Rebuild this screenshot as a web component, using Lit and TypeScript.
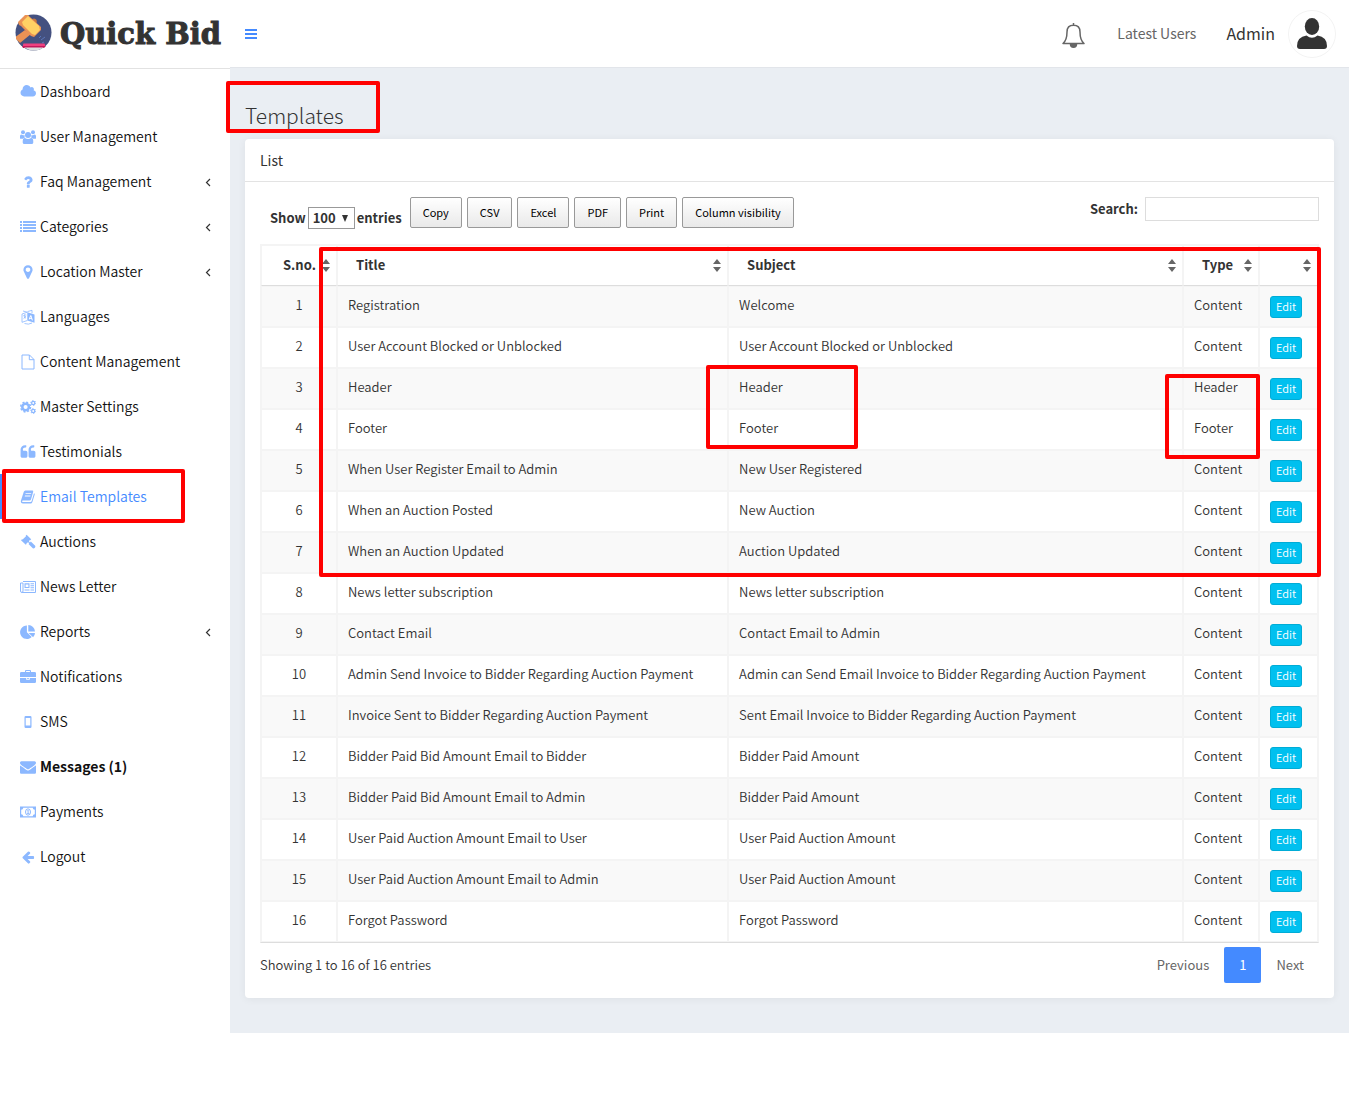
import { LitElement, html, css, svg } from "lit";
import { customElement, property } from "lit/decorators.js";
import { classMap } from "lit/directives/class-map.js";

const wide = (d: string) => svg`<g transform="scale(0.008929)"><path d=${d}></path></g>`;

const ICONS: Record<string, unknown> = {
  cloud: svg`<g transform="scale(0.00806)"><path d="M1984 1152q0 159-112.500 271.500t-271.500 112.500h-1088q-185 0-316.500-131.500t-131.500-316.500q0-132 71-241.500t187-163.500q-2-28-2-43 0-212 150-362t362-150q158 0 286.500 88t187.500 230q70-62 166-62 106 0 181 75t75 181q0 75-41 138 129 30 213 134.500t84 239.500z"></path></g>`,
  users: svg`<circle cx="3" cy="3.300" r="2"></circle><circle cx="13" cy="3.300" r="2"></circle><path d="M0 9.300V7.200Q0 5.600 1.300 5.600Q3 6.700 4.600 6Q4.300 7.800 5 8.600Q3.600 8.800 3 9.800H.8Q0 9.800 0 9.300zM16 9.300V7.200Q16 5.600 14.700 5.600Q13 6.700 11.400 6Q11.700 7.800 11 8.600Q12.400 8.800 13 9.800H15.200Q16 9.800 16 9.300z"></path><circle cx="8" cy="6" r="3"></circle><path d="M2.700 13.500Q2.500 9 5 9.100Q8 11 11 9.100Q13.500 9 13.300 13.500Q13.200 15 11.600 15H4.400Q2.800 15 2.700 13.500z"></path>`,
  question: wide("M1088 1256v240q0 16-12 28t-28 12h-240q-16 0-28-12t-12-28v-240q0-16 12-28t28-12h240q16 0 28 12t12 28zm316-600q0 54-15.500 101t-35 76.500-55 59.500-57.500 43.500-61 35.500q-41 23-68.500 65t-27.500 67q0 17-12 32.500t-28 15.500h-240q-15 0-25.500-18.500t-10.500-37.500v-45q0-83 65-156.500t143-108.500q59-27 84-56t25-76q0-42-46.500-74t-107.500-32q-65 0-108 29-35 25-107 115-13 16-31 16-12 0-25-8l-164-125q-13-10-15.500-25t5.500-28q160-266 464-266 80 0 161 31t146 83 106 127.500 41 158.500z"),
  list: svg`<path d="M0 2h2v2H0zM0 5h2v2H0zM0 8h2v2H0zM0 11h2v2H0zM3 2h13v2H3zM3 5h13v2H3zM3 8h13v2H3zM3 11h13v2H3z"></path>`,
  marker: wide("M1152 640q0-106-75-181t-181-75-181 75-75 181 75 181 181 75 181-75 75-181zm256 0q0 109-33 179l-364 774q-16 33-47.500 52t-67.500 19-67.500-19-46.500-52l-365-774q-33-70-33-179 0-212 150-362t362-150 362 150 150 362z"),
  language: svg`<path d="M7.300 3.200L14.500 5.400V13.800L7.300 11.500zM10.300 6.200L8.700 10.300L9.700 10.600L10 9.700L11.600 10.200L11.900 11.300L12.900 11.600L11.400 6.600zM10.800 7.500L11.300 9.200L10.300 8.900z" fill-rule="evenodd"></path><path d="M7.300 3.200L2 5V13.300L7.300 11.500M3 2L7.300 3.200M7.500 2.600L12 1.300V4.200M4.500 14.500Q8.500 16 12 14" fill="none" stroke="currentColor" stroke-width="0.800"></path><path d="M3.300 6.600L6.200 5.700M4.500 5.400L4.800 9M3.500 9.600Q5.600 8.500 5.900 6.700M3.800 7.600L6 9.300" fill="none" stroke="currentColor" stroke-width="0.700"></path>`,
  file: svg`<path d="M2 1H9.500L14 5.500V15H2zM9.300 1V5.700H14" fill="none" stroke="currentColor"></path>`,
  cogs: svg`<circle cx="5.600" cy="8" r="3.300" fill="none" stroke="currentColor" stroke-width="2.500"></circle><circle cx="5.600" cy="8" r="4.900" fill="none" stroke="currentColor" stroke-width="1.500" stroke-dasharray="2 1.850"></circle><circle cx="13.200" cy="4" r="1.600" fill="none" stroke="currentColor" stroke-width="1.300"></circle><circle cx="13.200" cy="4" r="2.500" fill="none" stroke="currentColor" stroke-dasharray="1.200 1.420"></circle><circle cx="13.200" cy="12" r="1.600" fill="none" stroke="currentColor" stroke-width="1.300"></circle><circle cx="13.200" cy="12" r="2.500" fill="none" stroke="currentColor" stroke-dasharray="1.200 1.420"></circle>`,
  quote: wide("M832 960v384q0 80-56 136t-136 56h-384q-80 0-136-56t-56-136v-704q0-104 40.500-198.500t109.500-163.500 163.500-109.500 198.500-40.500h64q26 0 45 19t19 45v128q0 26-19 45t-45 19h-64q-106 0-181 75t-75 181v32q0 40 28 68t68 28h224q80 0 136 56t56 136zm896 0v384q0 80-56 136t-136 56h-384q-80 0-136-56t-56-136v-704q0-104 40.500-198.500t109.500-163.500 163.500-109.500 198.500-40.500h64q26 0 45 19t19 45v128q0 26-19 45t-45 19h-64q-106 0-181 75t-75 181v32q0 40 28 68t68 28h224q80 0 136 56t56 136z"),
  book: svg`<path d="M5.300 1.500H12.300Q13.500 1.500 13.200 2.700L11 10.500Q10.700 11.500 9.500 11.500H3Q2 11.500 2 12.200Q2 13 3 13H10.500Q11.300 13 11.600 12.200L14 4.200Q15 4.500 14.700 5.600L12.400 13Q12 14.500 10.500 14.500H2.800Q.8 14.500 .8 12.500Q.8 11.600 1.200 10.700L3.700 3Q4.200 1.500 5.300 1.500zM5.700 4.200L5.400 5.100H11L11.300 4.200zM5 6.600L4.700 7.500H10.300L10.600 6.600z" fill-rule="evenodd"></path>`,
  gavel: svg`<path d="M6.600 .8L11.200 5.300L10.300 6.300L9.700 6L8.900 7.400L10 8.400L10.800 7.500L15.200 11.800Q15.700 12.800 14.900 13.700Q13.900 14.700 12.800 14.300L8.500 10L9.200 9.300L8.100 8.200L6.400 9.200L6.700 9.800L5.800 10.800L1 6.200L2 5.300L2.600 5.600L6 2.300L5.700 1.700z"></path>`,
  news: svg`<path d="M3 2.500H15.500V13.500H2Q.5 13.500 .5 12V4H3V12Q3 13.500 1.800 13.500" fill="none" stroke="currentColor"></path><path d="M4.500 4.300H9.500V9H4.500zM5.600 5.400V7.900H8.400V5.400zM10.500 4.300H14V5.300H10.500zM10.500 6.300H14V7.300H10.500zM10.500 8.300H14V9.300H10.500zM4.500 10.500H9.500V11.500H4.500zM10.500 10.500H14V11.500H10.500z" fill-rule="evenodd"></path>`,
  pie: svg`<path d="M6.900 1.400V8.200L11.700 13A6.800 6.800 0 1 1 6.900 1.400zM8.300 1A6.800 6.800 0 0 1 15 7.600H8.300zM8.600 8.900H15Q14.900 11.400 13.100 13.300z"></path>`,
  briefcase: svg`<path d="M5 3V2Q5 1 6 1H10Q11 1 11 2V3H14.700Q16 3 16 4.300V8H0V4.300Q0 3 1.300 3zM6.100 3H9.900V2.100H6.100zM0 9H6.200V10.800H9.800V9H16V12.700Q16 14 14.700 14H1.300Q0 14 0 12.700zM7.200 9H8.800V10H7.200z" fill-rule="evenodd"></path>`,
  mobile: svg`<path d="M5.700 2H10.300Q11.500 2 11.500 3.200V12.800Q11.500 14 10.300 14H5.700Q4.500 14 4.500 12.800V3.200Q4.500 2 5.700 2zM5.700 4V11.500H10.300V4z" fill-rule="evenodd"></path>`,
  envelope: wide("M1792 710v794q0 66-47 113t-113 47h-1472q-66 0-113-47t-47-113v-794q44 49 101 87 362 246 497 345 57 42 92.500 65.500t94.500 48 110 24.500h2q51 0 110-24.500t94.500-48 92.500-65.500q170-123 498-345 57-39 100-87zm0-294q0 79-49 151t-122 123q-376 261-468 325-10 7-42.500 31t-54 38.500-52 32.500-57.500 27-50 9h-2q-23 0-50-9t-57.500-27-52-32.500-54-38.500-42.500-31q-91-64-262-182.500t-205-142.500q-62-42-117-115.500t-55-136.500q0-78 41.500-130t118.500-52h1472q65 0 112.500 47t47.500 113z"),
  money: svg`<path d="M0 2.500H16V13.500H0zM3.300 3.700Q3.100 5.600 1.200 5.800V10.200Q3.100 10.400 3.300 12.300H12.700Q12.900 10.400 14.800 10.200V5.800Q12.900 5.600 12.700 3.700z" fill-rule="evenodd"></path><ellipse cx="8" cy="8" rx="2.500" ry="3.200" fill="none" stroke="currentColor"></ellipse><path d="M7.200 6.500L8 5.900H8.600V9.300H9.300V10.100H6.900V9.300H7.600V7.100L7.200 7.300z"></path>`,
  arrow: svg`<g transform="translate(1 1) scale(0.00785)"><path d="M1664 896v128q0 53-32.500 90.500t-84.500 37.500h-704l293 294q38 36 38 90t-38 90l-75 76q-37 37-90 37-52 0-91-37l-651-652q-37-37-37-90 0-52 37-91l651-650q38-38 91-38 52 0 90 38l75 74q38 38 38 91t-38 91l-293 293h704q52 0 84.500 37.500t32.500 90.500z"></path></g>`,
};

interface MenuEntry {
  label: string;
  icon: string;
  tree?: boolean;
  active?: boolean;
  strong?: boolean;
}

const MENU: MenuEntry[] = [
  { label: "Dashboard", icon: "cloud" },
  { label: "User Management", icon: "users" },
  { label: "Faq Management", icon: "question", tree: true },
  { label: "Categories", icon: "list", tree: true },
  { label: "Location Master", icon: "marker", tree: true },
  { label: "Languages", icon: "language" },
  { label: "Content Management", icon: "file" },
  { label: "Master Settings", icon: "cogs" },
  { label: "Testimonials", icon: "quote" },
  { label: "Email Templates", icon: "book", active: true },
  { label: "Auctions", icon: "gavel" },
  { label: "News Letter", icon: "news" },
  { label: "Reports", icon: "pie", tree: true },
  { label: "Notifications", icon: "briefcase" },
  { label: "SMS", icon: "mobile" },
  { label: "Messages (1)", icon: "envelope", strong: true },
  { label: "Payments", icon: "money" },
  { label: "Logout", icon: "arrow" },
];

const TEMPLATES: [string, string, string][] = [
  ["Registration", "Welcome", "Content"],
  ["User Account Blocked or Unblocked", "User Account Blocked or Unblocked", "Content"],
  ["Header", "Header", "Header"],
  ["Footer", "Footer", "Footer"],
  ["When User Register Email to Admin", "New User Registered", "Content"],
  ["When an Auction Posted", "New Auction", "Content"],
  ["When an Auction Updated", "Auction Updated", "Content"],
  ["News letter subscription", "News letter subscription", "Content"],
  ["Contact Email", "Contact Email to Admin", "Content"],
  ["Admin Send Invoice to Bidder Regarding Auction Payment", "Admin can Send Email Invoice to Bidder Regarding Auction Payment", "Content"],
  ["Invoice Sent to Bidder Regarding Auction Payment", "Sent Email Invoice to Bidder Regarding Auction Payment", "Content"],
  ["Bidder Paid Bid Amount Email to Bidder", "Bidder Paid Amount", "Content"],
  ["Bidder Paid Bid Amount Email to Admin", "Bidder Paid Amount", "Content"],
  ["User Paid Auction Amount Email to User", "User Paid Auction Amount", "Content"],
  ["User Paid Auction Amount Email to Admin", "User Paid Auction Amount", "Content"],
  ["Forgot Password", "Forgot Password", "Content"],
];

const EXPORTS = ["Copy", "CSV", "Excel", "PDF", "Print", "Column visibility"];

@customElement("top-bar")
class TopBar extends LitElement {
  static styles = css`
    :host { display: block; }
    .bar { display: flex; align-items: center; height: 67px; background: #fff; }
    .brand { display: flex; align-items: center; box-sizing: border-box; width: 230px; padding-left: 15px; color: #333; text-decoration: none; }
    .emblem { flex: none; width: 37px; height: 37px; margin: 0 8px 2px 0; }
    .name { font: bold 29px/44px "DejaVu Serif", serif; white-space: nowrap; -webkit-text-stroke: 1px #333; }
    .toggle { display: flex; padding: 0; margin-left: 15px; border: 0; background: none; cursor: pointer; }
    .right { display: flex; align-items: center; margin-left: auto; padding-right: 13px; }
    .bell { display: flex; padding: 0; border: 0; background: none; cursor: pointer; margin: 4px 32px 0 0; }
    .latest { padding-bottom: 2px; color: #666; font-size: 14px; text-decoration: none; margin-right: 30px; }
    .admin { padding-bottom: 2px; color: #333; font-size: 16px; text-decoration: none; margin-right: 13px; }
    .avatar { display: block; }
  `;
  render() {
    return html`<header class="bar">
      <a class="brand" href="#" aria-label="Quick Bid">
        <svg class="emblem" viewBox="0 0 37 37" aria-hidden="true">
          <circle cx="18.500" cy="18.500" r="18" fill="#445180"></circle>
          <path d="M10 16L16 20L5 29L1 25V22.500z" fill="#ea9255"></path>
          <path d="M17 5Q20 3.500 21.500 6Q22.500 8.500 21 10z" fill="#c9793f"></path>
          <path d="M10 1L3 8L4 11L6 12L16 22L19 23L26 16L26 13L15 3L13 1z" fill="#ea9255"></path>
          <path d="M13 2L7 8L8 11L17 20L20 21L25 16L24 12L15 4z" fill="#ffd164"></path>
          <path d="M24 24l2-2M26 26l4-3M27 29l2-1" stroke="#5b77ba" stroke-width="1"></path>
          <rect x="8" y="29.500" width="22" height="3" rx="1" fill="#f0407f"></rect>
          <path d="M7 32H31L29 34H8z" fill="#c2185b"></path>
          <path d="M9 33.500H29Q19 39.500 9 33.500z" fill="#ddd"></path>
        </svg>
        <span class="name">Quick Bid</span>
      </a>
      <button class="toggle" type="button" aria-label="Toggle navigation">
        <svg width="12" height="10" viewBox="0 0 12 10" fill="#448aff"><path d="M0 0h12v2H0zM0 4h12v2H0zM0 8h12v2H0z"></path></svg>
      </button>
      <div class="right">
        <button class="bell" type="button" aria-label="Alerts">
          <svg width="23" height="25" viewBox="0 0 23 25" fill="none" stroke="#666" stroke-width="1.500">
            <path d="M11.500 0V2.500M5 9Q5 2.300 11.500 2.300T18 9Q18 17 22 20.500H1Q5 17 5 9z" stroke-linejoin="round"></path>
            <path d="M8.500 21.300H14.500Q14.500 24.200 11.500 24.200T8.500 21.300z" fill="#666"></path>
          </svg>
        </button>
        <a class="latest" href="#">Latest Users</a>
        <a class="admin" href="#">Admin</a>
        <svg class="avatar" width="48" height="48" viewBox="0 0 48 48" aria-hidden="true">
          <circle cx="24" cy="24" r="23.500" fill="#fff" stroke="#f3f3f3"></circle>
          <ellipse cx="24" cy="16.500" rx="7.200" ry="8.500" fill="#333"></ellipse>
          <path d="M9 36Q9 27 18.500 25.500Q24 30 29.500 25.500Q39 27 39 36Q39 39 36 39H12Q9 39 9 36z" fill="#333"></path>
        </svg>
      </div>
    </header>`;
  }
}

@customElement("side-menu")
class SideMenu extends LitElement {
  static styles = css`
    :host { display: block; }
    .list { list-style: none; margin: 0; padding: 0; border-top: 1px solid #e2e2e2; }
    .item { position: relative; }
    .link { display: flex; align-items: center; box-sizing: border-box; height: 45px; padding: 0 19px 0 17px; border-left: 3px solid transparent; color: #111; font-size: 14px; font-weight: 350; line-height: 20px; text-decoration: none; white-space: nowrap; }
    .icon { flex: none; width: 16px; height: 16px; margin-right: 4px; fill: currentColor; color: #8cb8ff; }
    .text { padding-bottom: 1px; }
    .active { border-left-color: #448aff; color: #448aff; }
    .strong { font-weight: bold; }
    .chevron { margin: 2px 0 0 auto; }
    .mark { position: absolute; left: 2px; top: -5px; width: 183px; height: 54px; box-sizing: border-box; border: 4px solid #f00; border-radius: 2px; pointer-events: none; }
  `;
  render() {
    return html`<nav aria-label="Main"><ul class="list">
      ${MENU.map((m) => html`<li class="item">
        <a class=${classMap({ link: true, active: !!m.active, strong: !!m.strong })} href="#">
          <svg class="icon" viewBox="0 0 16 16" aria-hidden="true">${ICONS[m.icon]}</svg>
          <span class="text">${m.label}</span>
          ${m.tree ? html`<svg class="chevron" width="6" height="9" viewBox="0 0 6 9" fill="none" stroke="#333" stroke-width="1.200"><path d="M5 1L1.500 4.500L5 8"></path></svg>` : ""}
        </a>
        ${m.active ? html`<div class="mark"></div>` : ""}
      </li>`)}
    </ul></nav>`;
  }
}

@customElement("template-table")
class TemplateTable extends LitElement {
  @property({ attribute: false }) rows: [string, string, string][] = [];

  static styles = css`
    :host { display: block; position: relative; }
    .table { width: 100%; table-layout: fixed; border-collapse: separate; border-spacing: 0; border: 1px solid #f4f4f4; border-bottom-color: #ddd; font-size: 13px; line-height: 18px; }
    .no { width: 76px; }
    .title { width: 37%; }
    .type { width: 76px; }
    .act { width: 59px; }
    .head, .cell { box-sizing: border-box; height: 41px; border: 1px solid #f4f4f4; text-align: left; white-space: nowrap; }
    .head { padding: 0 18px; border-bottom-color: #ddd; font-weight: bold; background: #fff; }
    .label { display: flex; align-items: center; justify-content: space-between; margin-right: -12px; }
    .name { padding-bottom: 1px; }
    .num .label { margin-left: 3px; }
    .sort { flex: none; }
    .cell { padding: 0 10px 4px; font-weight: 350; }
    .num.cell { text-align: center; }
    .row:nth-child(odd) .cell { background: #f9f9f9; }
    .action.cell { padding: 0 10px; }
    .edit { display: block; box-sizing: border-box; width: 32px; height: 22px; padding-top: 1px; border: 1px solid #00acd6; border-radius: 3px; background: #00c0ef; color: #fff; font-size: 11px; line-height: 17px; text-align: center; text-decoration: none; }
    .mark { position: absolute; box-sizing: border-box; border: 4px solid #f00; border-radius: 2px; pointer-events: none; }
    .all { left: 59px; right: -2px; top: 3px; height: 330px; }
    .subjects { left: 446px; width: 152px; top: 121px; height: 84px; }
    .types { right: 59px; width: 95px; top: 130px; height: 85px; }
  `;
  private head(label: string, extra = "") {
    return html`<th class="head ${extra}" scope="col"><div class="label"><span class="name">${label}</span>
      <svg class="sort" width="8" height="13" viewBox="0 0 8 13" fill="#666" aria-hidden="true"><path d="M4 0L8 5H0zM4 13L0 8H8z"></path></svg></div></th>`;
  }
  render() {
    return html`<table class="table">
        <colgroup><col class="no"><col class="title"><col><col class="type"><col class="act"></colgroup>
        <thead><tr>${this.head("S.no.", "num")}${this.head("Title")}${this.head("Subject")}${this.head("Type")}${this.head("")}</tr></thead>
        <tbody>
          ${this.rows.map(([title, subject, type], i) => html`<tr class="row">
            <td class="cell num">${i + 1}</td><td class="cell">${title}</td><td class="cell">${subject}</td><td class="cell">${type}</td>
            <td class="cell action"><a class="edit" href="#">Edit</a></td>
          </tr>`)}
        </tbody>
      </table>
      <div class="mark all"></div><div class="mark subjects"></div><div class="mark types"></div>`;
  }
}

@customElement("app-root")
class AppRoot extends LitElement {
  static styles = css`
    :host { display: block; min-height: 100vh; background: #fff; color: #333; font-family: "Noto Sans CJK SC", "Noto Sans", sans-serif; font-size: 13px; line-height: 18px; }
    .body { display: grid; grid-template-columns: 230px minmax(0, 1fr); }
    .side { padding-top: 1px; }
    .main { box-sizing: border-box; padding: 32px 15px 35px; border-top: 1px solid #e2e5ea; background: #eaeef3; }
    .heading { position: relative; margin: 0; padding-bottom: 9px; font-size: 21px; line-height: 30px; font-weight: 300; }
    .heading-mark { position: absolute; left: -19px; top: -19px; width: 154px; height: 52px; box-sizing: border-box; border: 4px solid #f00; border-radius: 2px; pointer-events: none; z-index: 1; }
    .card { background: #fff; border-radius: 4px; box-shadow: 0 1px 8px rgba(0, 0, 0, 0.06); }
    .title { margin: 0; padding: 11px 15px; border-bottom: 1px solid #e3e3e3; font-size: 14px; line-height: 20px; font-weight: 400; }
    .content { padding: 15px; }
    .tools { display: flex; align-items: flex-start; margin-bottom: 15px; }
    .length { display: flex; align-items: center; gap: 2px; margin: 10px 8px 0 10px; font-weight: bold; }
    .select { box-sizing: border-box; width: 47px; height: 22px; padding: 0 0 0 4px; border: 1px solid #999; border-radius: 0; background: #fff; color: #333; font: inherit; appearance: none; }
    .picker { display: grid; align-items: center; }
    .picker > * { grid-area: 1 / 1; }
    .caret { justify-self: end; margin-right: 7px; pointer-events: none; }
    .buttons { display: flex; gap: 5px; }
    .export { box-sizing: border-box; height: 31px; padding: 0 12px 2px; border: 1px solid #999; border-radius: 2px; background: linear-gradient(#fff, #e9e9e9); color: #000; font: 11px/16px "Noto Sans CJK SC", "Noto Sans", sans-serif; cursor: pointer; }
    .search { display: flex; align-items: center; gap: 7px; margin-left: auto; font-weight: bold; }
    .input { box-sizing: border-box; width: 174px; height: 24px; border: 1px solid #ddd; font: inherit; padding: 0 5px; }
    .foot { display: flex; justify-content: space-between; padding-top: 4px; }
    .info { padding-top: 9px; font-weight: 350; }
    .pages { display: flex; }
    .page { box-sizing: border-box; height: 36px; min-width: 37px; padding: 9px 15px; color: #666; text-align: center; text-decoration: none; }
    .current { background: #448aff; color: #fff; border-radius: 2px; }
  `;
  render() {
    return html`<top-bar></top-bar>
      <div class="body">
        <aside class="side"><side-menu></side-menu></aside>
        <main class="main">
          <h1 class="heading">Templates<span class="heading-mark"></span></h1>
          <section class="card">
            <h2 class="title">List</h2>
            <div class="content">
              <div class="tools">
                <div class="length">
                  <label for="length">Show</label>
                  <span class="picker">
                    <select class="select" id="length"><option>100</option></select>
                    <svg class="caret" width="6" height="7" viewBox="0 0 6 7" fill="#333" aria-hidden="true"><path d="M0 0H6L3 7z"></path></svg>
                  </span>
                  <span>entries</span>
                </div>
                <div class="buttons">${EXPORTS.map((e) => html`<button class="export" type="button">${e}</button>`)}</div>
                <div class="search"><label for="search">Search:</label><input class="input" id="search" type="search"></div>
              </div>
              <template-table .rows=${TEMPLATES}></template-table>
              <div class="foot">
                <div class="info">Showing 1 to 16 of 16 entries</div>
                <nav class="pages" aria-label="Pages"><a class="page" href="#">Previous</a><a class="page current" href="#">1</a><a class="page" href="#">Next</a></nav>
              </div>
            </div>
          </section>
        </main>
      </div>`;
  }
}
